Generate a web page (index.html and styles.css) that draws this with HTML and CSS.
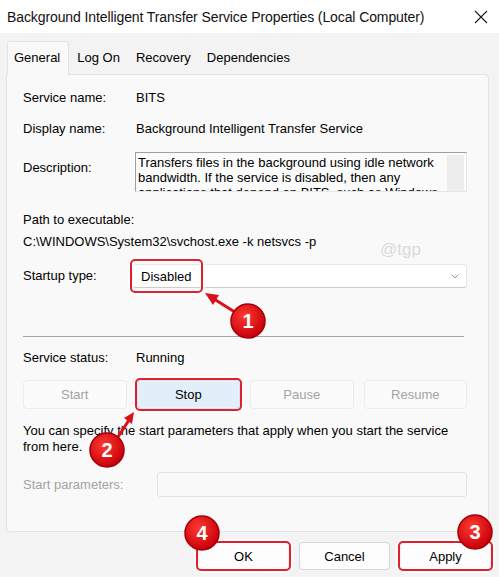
FILE: index.html
```html
<!DOCTYPE html>
<html lang="en">
<head>
	<meta charset="UTF-8">
	<title>BITS Properties</title>
	<link rel="stylesheet" href="styles.css">
</head>
<body>
	<div class="window">
		<div class="titlebar">
			<span class="title">Background Intelligent Transfer Service Properties (Local Computer)</span>
			<svg class="close" width="14" height="14" viewBox="0 0 14 14"><path d="M1 1L13 13M13 1L1 13" stroke="#1a1a1a" stroke-width="1.1" fill="none"/></svg>
		</div>
		<div class="tabs">
			<span class="tab active">General</span>
			<span class="tab">Log On</span>
			<span class="tab">Recovery</span>
			<span class="tab">Dependencies</span>
		</div>
		<div class="panel">
			<div class="row first"><span class="label">Service name:</span><span>BITS</span></div>
			<div class="row gap-sm"><span class="label">Display name:</span><span>Background Intelligent Transfer Service</span></div>
			<div class="row desc-row">
				<span class="label">Description:</span>
				<div class="desc">
					<div class="desc-text">Transfers files in the background using idle network bandwidth. If the service is disabled, then any applications that depend on BITS, such as Windows</div>
					<div class="scroll"></div>
				</div>
			</div>
			<div class="path-label">Path to executable:</div>
			<div class="path">C:\WINDOWS\System32\svchost.exe -k netsvcs -p</div>
			<div class="row startup">
				<span class="label">Startup type:</span>
				<div class="select">
					<span class="marked">Disabled</span>
					<svg class="chev" width="8" height="5" viewBox="0 0 8 5"><path d="M0.5 0.5L4 4L7.5 0.5" stroke="#9a9a9a" fill="none"/></svg>
				</div>
			</div>
			<div class="sep"></div>
			<div class="row status"><span class="label">Service status:</span><span>Running</span></div>
			<div class="ctrl">
				<button class="cbtn" disabled>Start</button>
				<button class="cbtn stop marked">Stop</button>
				<button class="cbtn" disabled>Pause</button>
				<button class="cbtn" disabled>Resume</button>
			</div>
			<p class="hint">You can specify the start parameters that apply when you start the service<br>from here.</p>
			<div class="row params"><span class="label dim">Start parameters:</span><div class="input"></div></div>
		</div>
		<div class="footer">
			<button class="btn marked">OK</button>
			<button class="btn">Cancel</button>
			<button class="btn marked">Apply</button>
		</div>

		<span class="watermark">@tgp</span>

		<!-- annotation layer -->
		<svg class="notes" width="499" height="577" viewBox="0 0 499 577">
			<defs>
				<radialGradient id="red" cx="40%" cy="35%" r="65%">
					<stop offset="0" stop-color="#ff3a2e"/>
					<stop offset="1" stop-color="#c8000c"/>
				</radialGradient>
			</defs>
			<g stroke="#d8121c" stroke-width="3" stroke-linecap="round">
				<line x1="214" y1="299" x2="238" y2="314"/>
				<line x1="116" y1="440" x2="129" y2="420"/>
			</g>
			<g fill="#d8121c">
				<polygon points="205,293 219,295 213,305"/>
				<polygon points="134,412 132,424 124,418"/>
			</g>
			<g fill="url(#red)" stroke="#a30008" stroke-width="1.5">
				<circle cx="248" cy="321" r="17"/>
				<circle cx="107" cy="450" r="17"/>
				<circle cx="475" cy="532" r="17"/>
				<circle cx="202" cy="533" r="17"/>
			</g>
			<g class="num" fill="#fff" text-anchor="middle">
				<text x="248" y="328">1</text>
				<text x="107" y="457">2</text>
				<text x="475" y="539">3</text>
				<text x="202" y="540">4</text>
			</g>
		</svg>
	</div>
</body>
</html>
```

FILE: styles.css
```css
*{margin:0;padding:0;box-sizing:border-box;}
body{background-color:#f3f3f3;font-family:"Liberation Sans",Arial,sans-serif;font-size:13px;color:#000;}
.window{width:499px;height:577px;position:relative;overflow:hidden;}

/* title bar */
.titlebar{height:33px;background-color:#fff;display:flex;align-items:center;justify-content:space-between;padding:0 11px 0 7px;}
.title{font-size:14px;letter-spacing:-0.1px;color:#111;}
.close{margin-top:1px;}

/* tabs */
.tabs{height:41px;display:flex;align-items:flex-end;padding-left:7px;}
.tab{height:28px;line-height:24px;padding:0 8px 4px;color:#000;}
.tab.active{height:34px;line-height:24px;padding:4px 8px 6px 6px;margin-bottom:-1px;background-color:#f9f9f9;border:1px solid #e3e3e3;border-bottom:none;border-radius:3px 3px 0 0;position:relative;z-index:1;}

/* panel */
.panel{margin-left:6px;width:483px;height:458px;background-color:#f9f9f9;border:1px solid #e3e3e3;border-radius:0 4px 4px 4px;padding:13px 21px 0 16px;}
.row{display:flex;align-items:center;line-height:20px;}
.label{width:113px;flex:none;}
.gap-sm{margin-top:11px;}
.desc-row{margin-top:13px;align-items:flex-start;}
.desc-row .label{padding-top:6px;}
.desc{flex:1;margin-left:-1px;height:40px;position:relative;overflow:hidden;background-color:#fbfbfb;border:1px solid #e6e6e6;border-top-color:#a0a0a0;border-left-color:#a0a0a0;}
.desc-text{padding:2px 22px 0 2px;line-height:15px;}
.scroll{position:absolute;top:2px;right:2px;bottom:0;width:17px;background-color:#ededed;}
.path-label{margin-top:18px;line-height:20px;}
.path{margin-top:2px;line-height:20px;}

.startup{margin-top:12px;}
.startup .label{width:109px;}
.select{flex:1;height:24px;background-color:#fff;border:1px solid #e6e6e6;border-bottom-color:#cdcdcd;border-radius:3px;display:flex;align-items:center;justify-content:space-between;padding:0 7px 0 8px;}
.chev{margin-top:1px;}

.sep{margin-top:48px;margin-right:3px;height:1px;background-color:#a6a6a6;}
.status{margin-top:11px;}

.ctrl{margin-top:12px;display:grid;grid-template-columns:repeat(4,1fr);column-gap:10px;}
.cbtn{height:29px;font:inherit;background-color:#fbfbfb;border:1px solid #ececec;border-radius:4px;color:#a3a3a3;}
.cbtn.stop{background-color:#e1effb;border-color:#6db1e6;color:#000;}
.hint{margin-top:14px;line-height:16px;}
.params{margin-top:17px;}
.params .label{width:134px;}
.dim{color:#a3a3a3;}
.input{flex:1;height:25px;background-color:#f9f9f9;border:1px solid #e3e3e3;border-radius:3px;}

/* footer */
.footer{margin-top:10px;padding-right:8px;display:flex;justify-content:flex-end;column-gap:10px;}
.btn{width:91px;height:28px;font:inherit;background-color:#fdfdfd;border:1px solid #d6d6d6;border-radius:4px;color:#000;}

/* red highlight boxes */
.marked{position:relative;}
.marked:after{content:"";position:absolute;left:-3px;right:-3px;top:-3px;bottom:-3px;border:2px solid #e0202c;border-radius:5px;box-shadow:0 0 2px 2px rgba(255,255,255,0.9),inset 0 0 2px 1px rgba(255,255,255,0.9);}
.select .marked{display:inline-block;line-height:20px;margin-top:1px;}
.select .marked:after{left:-11px;right:-11px;top:-8px;bottom:-6px;}
.footer .marked:after{top:-2px;bottom:-2px;}

.watermark{position:absolute;left:380px;top:240px;font-size:17px;color:#d9d9d9;}
.notes{position:absolute;left:0;top:0;pointer-events:none;}
.num text{font-family:"Liberation Sans",Arial,sans-serif;font-size:20px;font-weight:bold;}
```
